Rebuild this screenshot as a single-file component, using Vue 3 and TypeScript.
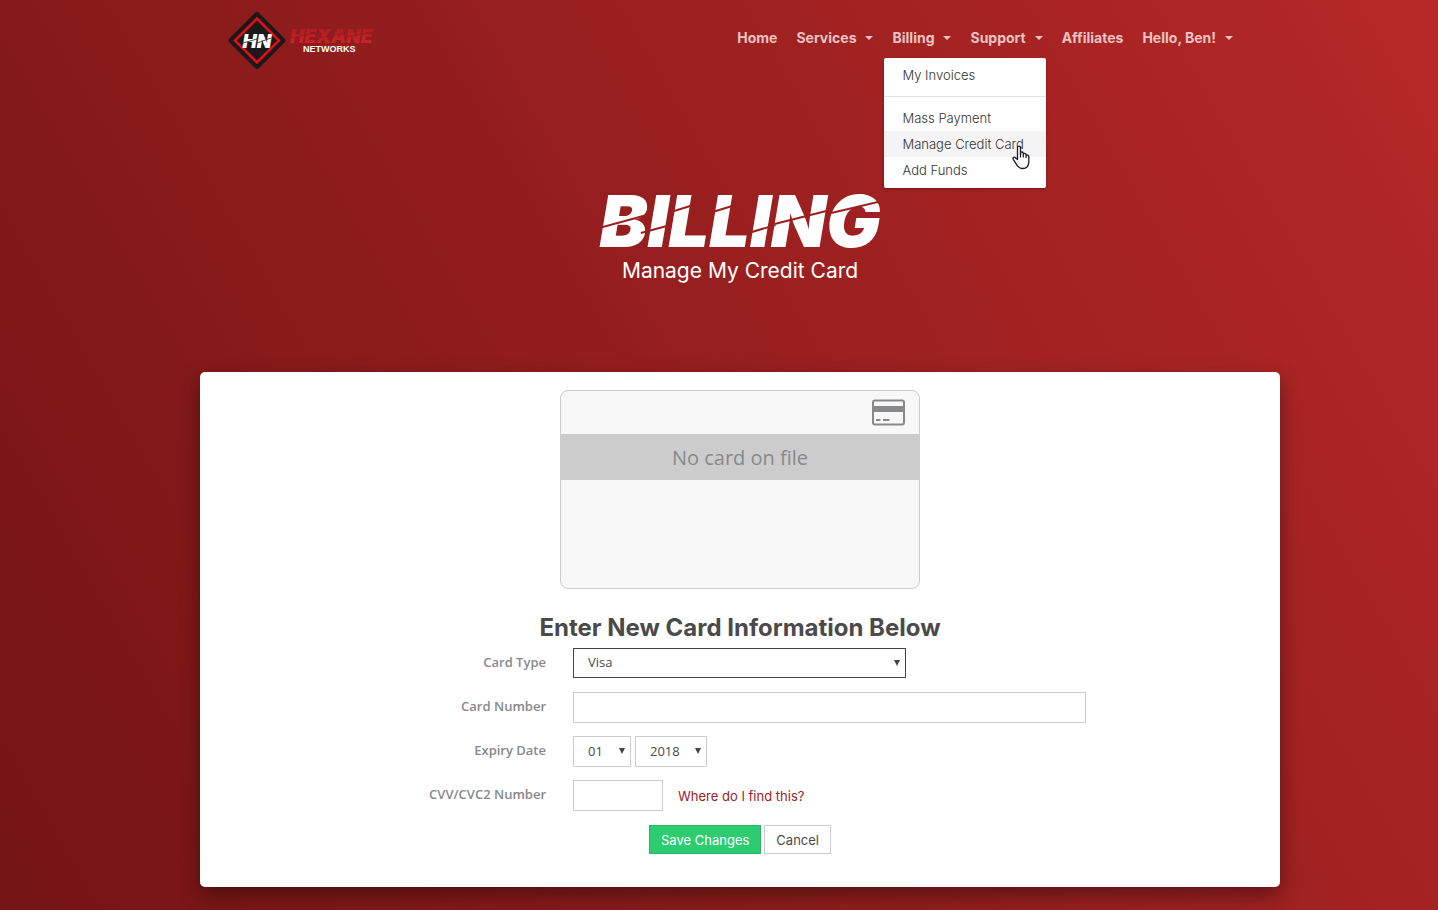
<script setup lang="ts">
import { ref } from 'vue'

interface NavItem {
  label: string
  caret: boolean
}

const navItems: NavItem[] = [
  { label: 'Home', caret: false },
  { label: 'Services', caret: true },
  { label: 'Billing', caret: true },
  { label: 'Support', caret: true },
  { label: 'Affiliates', caret: false },
  { label: 'Hello, Ben!', caret: true },
]

const billingLinks: string[] = ['Mass Payment', 'Manage Credit Card', 'Add Funds']
const activeLink = 'Manage Credit Card'

const cardType = ref('Visa')
const cardNumber = ref('')
const month = ref('01')
const year = ref('2018')
const cvv = ref('')
</script>

<template>
  <div class="page">
    <header class="header">
      <a href="#" class="brand" aria-label="Hexane Networks">
        <svg width="150" height="60" viewBox="0 0 150 60">
          <defs>
            <linearGradient id="hexane-fill" x1="0" y1="0" x2="0" y2="1">
              <stop offset="0" stop-color="#a81c20" />
              <stop offset="1" stop-color="#d3252b" />
            </linearGradient>
          </defs>
          <rect x="9" y="9.5" width="40" height="40" rx="2" transform="rotate(45 29 29.5)" fill="#1b1a1b" stroke="#1b1a1b" stroke-width="2" />
          <rect x="13.5" y="14" width="31" height="31" transform="rotate(45 29 29.5)" fill="none" stroke="#e20d18" stroke-width="2.6" />
          <text x="29" y="37" class="logo-mark" text-anchor="middle">HN</text>
          <path d="M15 32 L29 28 M29 32 L43 27" stroke="#1b1a1b" stroke-width=".8" />
          <text x="62" y="32" class="logo-name" fill="url(#hexane-fill)">HEXANE</text>
          <path d="M62 27 L91 21 M90 27 L119 22 M117 26 L146 21" stroke="#8f1c1d" stroke-width=".8" />
          <text x="75" y="41" class="logo-sub">NETWORKS</text>
        </svg>
      </a>
      <nav class="nav">
        <div v-for="item in navItems" :key="item.label" class="nav-item">
          <a href="#" class="nav-link">
            {{ item.label }}
            <span v-if="item.caret" class="caret"></span>
          </a>
          <div v-if="item.label === 'Billing'" class="menu">
            <a href="#" class="menu-link">My Invoices</a>
            <hr class="menu-rule" />
            <a
              v-for="link in billingLinks"
              :key="link"
              href="#"
              class="menu-link"
              :class="{ active: link === activeLink }"
            >{{ link }}</a>
            <svg class="pointer" width="18" height="25" viewBox="0 0 18 25">
              <path
                d="M5.500 14.500V2.600C5.500 .6 8.500 .6 8.500 2.600V9.500L8.500 7.800C9 6.500 11.200 6.800 11.300 8.300V9C12 7.900 14 8.300 14.100 9.700V10.400C15 9.500 16.800 10 16.800 11.500V16.500C16.800 21 14.500 23.500 10.800 23.500C7.500 23.500 6 21.800 4.500 19.300L1.200 14.300C.4 12.700 2.200 11.500 3.500 12.700Z"
                fill="#fff" stroke="#1c1c28" stroke-width="1.300" stroke-linejoin="round"
              />
              <path d="M8.500 8V12.500M11.300 9V12.500M14.100 10V13" fill="none" stroke="#1c1c28" stroke-width="1.200" />
            </svg>
          </div>
        </div>
      </nav>
    </header>

    <section class="hero">
      <h1 class="hero-title">
        BILLING
        <svg class="slashes" viewBox="0 0 282 56" preserveAspectRatio="none">
          <path
            d="M0 34 L48 21 M42 39 L68 32 M72 18 L98 10 M114 18 L140 10 M150 39 L177 31 M176 30 L232 16 M233 19 L284 7"
            fill="none" stroke="#9a1f1f" stroke-width="2"
          />
        </svg>
      </h1>
      <p class="hero-sub">Manage My Credit Card</p>
    </section>

    <main class="panel">
      <div class="card">
        <div class="card-top">
          <svg width="34" height="27" viewBox="0 0 34 27">
            <rect x="2" y="1.500" width="31" height="24" rx="2" fill="none" stroke="#87898b" stroke-width="2" />
            <path d="M2 7H33V13H2Z" fill="#87898b" />
            <path d="M5 21H9.500M12 21H18.500" stroke="#87898b" stroke-width="2" />
          </svg>
        </div>
        <div class="card-strip">No card on file</div>
      </div>

      <h2 class="form-title">Enter New Card Information Below</h2>
      <form class="form" @submit.prevent>
        <div class="row">
          <label for="card-type">Card Type</label>
          <div class="control">
            <span class="select wide">
              <select id="card-type" v-model="cardType" class="field focused">
                <option>Visa</option>
                <option>MasterCard</option>
              </select>
              <svg class="arrow" width="8" height="8" viewBox="0 0 8 8"><path d="M1 1H7L4 7Z" /></svg>
            </span>
          </div>
        </div>
        <div class="row">
          <label for="card-number">Card Number</label>
          <div class="control">
            <input id="card-number" v-model="cardNumber" class="field" type="text" autocomplete="off" />
          </div>
        </div>
        <div class="row">
          <label for="expiry-month">Expiry Date</label>
          <div class="control">
            <span class="select month">
              <select id="expiry-month" v-model="month" class="field">
                <option>01</option>
                <option>02</option>
              </select>
              <svg class="arrow" width="8" height="8" viewBox="0 0 8 8"><path d="M1 1H7L4 7Z" /></svg>
            </span>
            <span class="select year">
              <select v-model="year" class="field" aria-label="Expiry year">
                <option>2018</option>
                <option>2019</option>
              </select>
              <svg class="arrow" width="8" height="8" viewBox="0 0 8 8"><path d="M1 1H7L4 7Z" /></svg>
            </span>
          </div>
        </div>
        <div class="row">
          <label for="cvv">CVV/CVC2 Number</label>
          <div class="control">
            <input id="cvv" v-model="cvv" class="field cvv" type="text" autocomplete="off" />
            <a href="#" class="help">Where do I find this?</a>
          </div>
        </div>
        <div class="actions">
          <button type="submit" class="btn save">Save Changes</button>
          <button type="button" class="btn">Cancel</button>
        </div>
      </form>
    </main>
  </div>
</template>

<style>
body {
  margin: 0;
}
</style>

<style scoped>
* {
  box-sizing: border-box;
}
.page {
  min-height: 100vh;
  padding: 0 0 23px 42px;
  background: linear-gradient(60deg, #741414 0%, #b62828 100%);
  font-family: Inter, "Open Sans", sans-serif;
  font-size: 13px;
  color: #4a4a4a;
}
.header,
.panel {
  width: 100%;
  max-width: 1080px;
  margin: 0 auto;
}
.header {
  display: flex;
  justify-content: space-between;
  align-items: flex-start;
  height: 78px;
  padding: 11px 47px 0 28px;
}
.brand {
  display: block;
  height: 60px;
}
.logo-mark {
  font: italic 900 19px Inter, sans-serif;
  fill: #fff;
}
.logo-name {
  font: italic 900 19px Inter, sans-serif;
}
.logo-sub {
  font: 700 9px "Liberation Sans", sans-serif;
  fill: #fff;
}
.nav {
  display: flex;
  gap: 19px;
  padding-top: 17px;
}
.nav-item {
  position: relative;
}
.nav-link {
  display: flex;
  align-items: center;
  gap: 9px;
  font-size: 14px;
  line-height: 20px;
  font-weight: 700;
  color: #ecc3c3;
  text-decoration: none;
}
.caret {
  border: 4px solid transparent;
  border-top-color: #ecc3c3;
  border-bottom: 0;
}
.menu {
  position: absolute;
  z-index: 2;
  top: 30px;
  left: -8px;
  width: 162px;
  padding: 4px 0 5px;
  background: #fff;
  border-radius: 2px;
  box-shadow: 0 1px 3px rgba(0, 0, 0, 0.3);
}
.menu-link {
  display: block;
  padding-left: 18px;
  line-height: 26px;
  font-weight: 300;
  color: #333;
  text-decoration: none;
  white-space: nowrap;
}
.menu-link.active {
  background: #f4f4f4;
}
.menu-rule {
  height: 1px;
  margin: 8px 0;
  border: 0;
  background: #e1e1e1;
}
.pointer {
  position: absolute;
  top: 87px;
  left: 128px;
}
.hero {
  display: flex;
  flex-direction: column;
  align-items: center;
  padding: 108px 0 86px;
  color: #fff;
}
.hero-title {
  position: relative;
  margin: 0;
  font-size: 72px;
  line-height: 70px;
  font-weight: 900;
  font-style: italic;
}
.slashes {
  position: absolute;
  top: 8px;
  left: 0;
  width: 100%;
  height: 56px;
}
.hero-sub {
  margin: 0;
  font-size: 21px;
  line-height: 30px;
}
.panel {
  padding: 18px 0 33px;
  background: #fff;
  border-radius: 5px;
  box-shadow: 0 8px 20px rgba(0, 0, 0, 0.4);
}
.card {
  width: 360px;
  height: 199px;
  margin: 0 auto;
  border: 1px solid #ccc;
  border-radius: 8px;
  background: #f8f8f8;
}
.card-top {
  display: flex;
  justify-content: flex-end;
  height: 43px;
  padding: 8px 14px 0 0;
}
.card-strip {
  padding-top: 2px;
  background: #ccc;
  font: 20px/44px "Open Sans", sans-serif;
  color: #87898b;
  text-align: center;
}
.form-title {
  margin: 23px 0 5px;
  font-size: 24px;
  line-height: 31px;
  font-weight: 700;
  text-align: center;
}
.form {
  display: flex;
  flex-direction: column;
  gap: 13px;
}
.row {
  display: grid;
  grid-template-columns: 346fr 513fr 167fr;
  column-gap: 27px;
  min-height: 31px;
}
label {
  font: 600 13px/28px "Open Sans", sans-serif;
  color: #87898b;
  text-align: right;
}
.control {
  display: flex;
  gap: 4px;
}
.field {
  display: block;
  width: 100%;
  height: 31px;
  margin: 0;
  padding: 0 14px 2px;
  border: 1px solid #ccc;
  border-radius: 0;
  background: #fff;
  font: 13px "Open Sans", sans-serif;
  color: #4a4a4a;
  appearance: none;
  outline: 0;
}
.field.focused {
  height: 30px;
  border-color: #444;
}
.select {
  position: relative;
}
.wide {
  width: 65%;
}
.month {
  width: 58px;
}
.year {
  width: 72px;
}
.arrow {
  position: absolute;
  top: 11px;
  right: 5px;
  fill: #444;
  pointer-events: none;
}
.cvv {
  width: 90px;
}
.help {
  padding-left: 11px;
  line-height: 32px;
  color: #97241f;
  text-decoration: none;
}
.actions {
  display: flex;
  justify-content: center;
  gap: 3px;
}
.btn {
  height: 29px;
  padding: 0 11px;
  border: 1px solid #ccc;
  background: #fff;
  font: 13px Inter, sans-serif;
  color: #4a4a4a;
}
.btn.save {
  border-color: #29b765;
  background: #2ecc71;
  color: #fff;
}
</style>
